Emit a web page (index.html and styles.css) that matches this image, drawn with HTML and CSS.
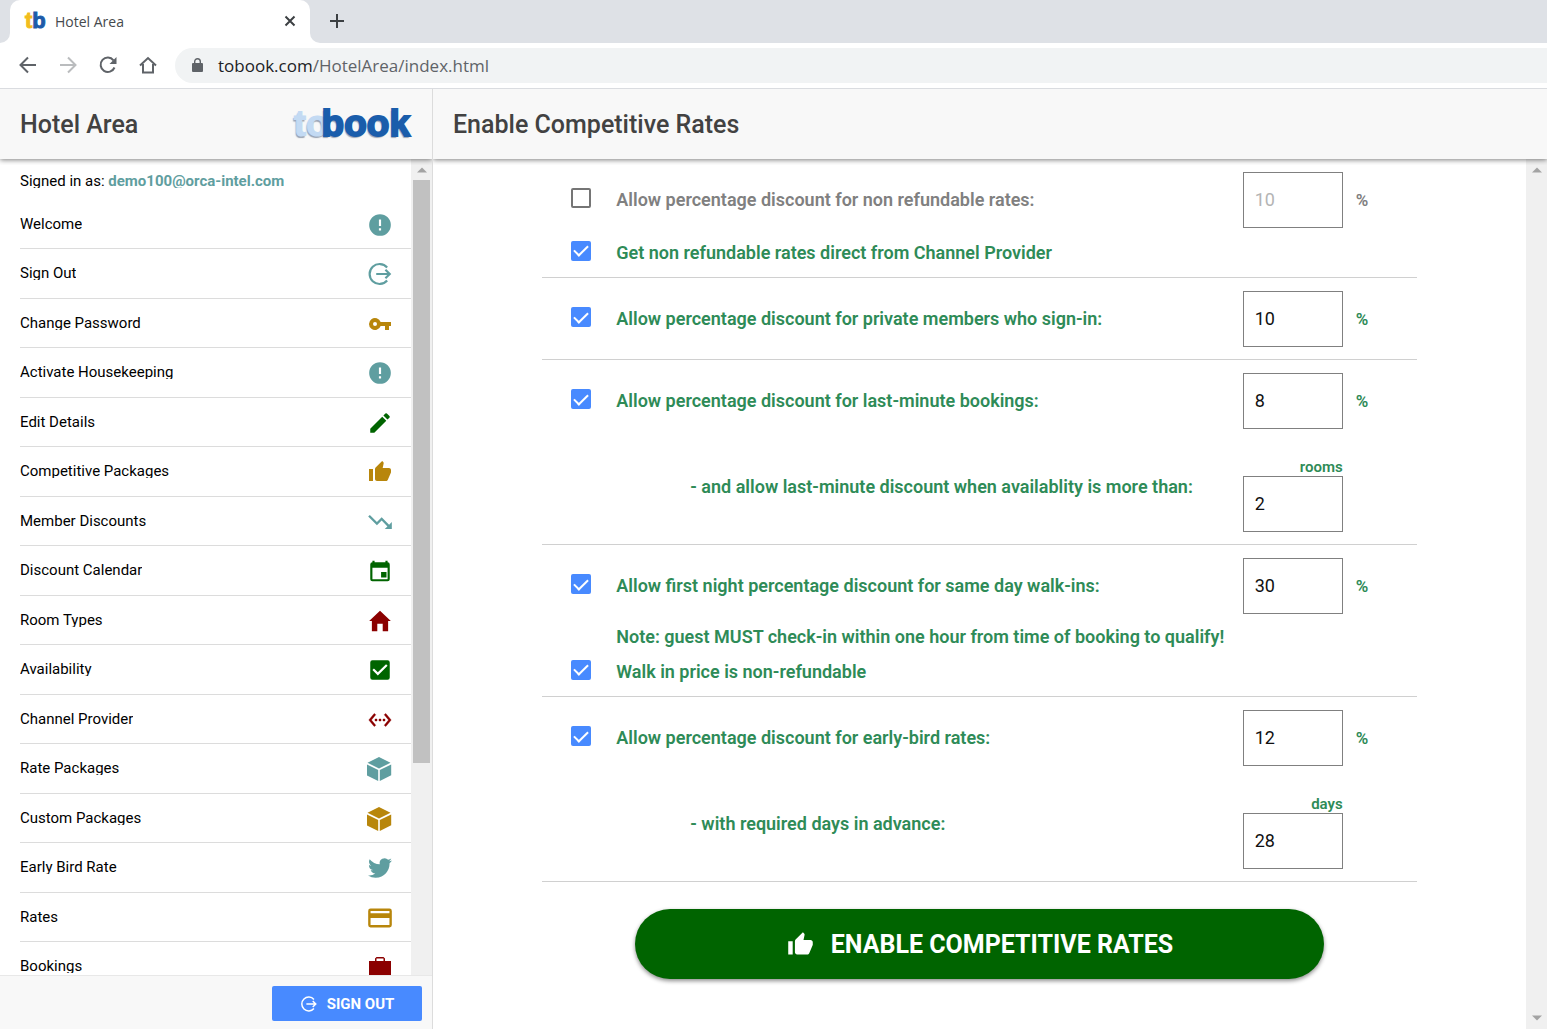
FILE: index.html
```html
<!DOCTYPE html>
<html lang="en">
<head>
<meta charset="utf-8">
<title>Hotel Area</title>
<link rel="stylesheet" href="styles.css">
</head>
<body>
<svg class="sprite" aria-hidden="true">
  <symbol id="alert" viewBox="0 0 24 24"><path d="M12 2a10 10 0 1 0 0 20 10 10 0 0 0 0-20zm1 15h-2v-2h2v2zm0-4h-2V7h2v6z"/></symbol>
  <symbol id="logout" viewBox="0 0 24 24"><path d="M18.600 6A9.200 9.200 0 1 0 18.600 18M8.500 12H21M17 8l4 4-4 4" fill="none" stroke="currentColor" stroke-width="2"/></symbol>
  <symbol id="key" viewBox="-1 -1 26 26"><path d="M12.650 10A6 6 0 1 0 12.650 14H17v4h4v-4h2v-4H12.650zM7 14a2 2 0 1 1 0-4 2 2 0 0 1 0 4z"/></symbol>
  <symbol id="pencil" viewBox="0 0 24 24"><path d="M3 17.250V21h3.750L17.810 9.940l-3.750-3.750L3 17.250zM20.710 7.040a1 1 0 0 0 0-1.410l-2.340-2.340a1 1 0 0 0-1.410 0l-1.830 1.830 3.750 3.750 1.830-1.830z"/></symbol>
  <symbol id="thumb" viewBox="-1 -1 26 26"><path d="M1 21h4V9H1v12zm22-11c0-1.100-.900-2-2-2h-6.310l.950-4.570.030-.320c0-.410-.170-.790-.440-1.060L14.170 1 7.590 7.590C7.220 7.950 7 8.450 7 9v10c0 1.100.900 2 2 2h9c.830 0 1.540-.500 1.840-1.220l3.020-7.050c.090-.230.140-.470.140-.730v-2z"/></symbol>
  <symbol id="trend" viewBox="1 1 22 22"><path d="M16 18l2.290-2.290-4.880-4.880-4 4L2 7.410 3.410 6l6 6 4-4 6.300 6.290L22 12v6z"/></symbol>
  <symbol id="calendar" viewBox="0 0 24 24"><path d="M18 13h-5v5h5zM17 2.500v1.500H7V2.500H5V4a2 2 0 0 0-2 2v13.500a2 2 0 0 0 2 2h14a2 2 0 0 0 2-2V6a2 2 0 0 0-2-2V2.500zM19 19.500H5V9h14z"/></symbol>
  <symbol id="home" viewBox="0 0 24 24"><path d="M9.500 21.500v-7h5v7h5V12H22L12 2.500 2 12h2.500v9.500z"/></symbol>
  <symbol id="tick" viewBox="0 0 24 24"><path d="M19 3H5a2 2 0 0 0-2 2v14a2 2 0 0 0 2 2h14a2 2 0 0 0 2-2V5a2 2 0 0 0-2-2zm-9 14l-5-5 1.410-1.410L10 14.170l7.590-7.590L19 8l-9 9z"/></symbol>
  <symbol id="channel" viewBox="-1 -1 26 26"><path d="M7.770 6.760L6.230 5.480.820 12l5.410 6.520 1.540-1.280L3.420 12zM7 13h2v-2H7zm10-2h-2v2h2zm-6 2h2v-2h-2zm6.770-7.520l-1.540 1.280L20.580 12l-4.350 5.240 1.540 1.280L23.180 12z" stroke="currentColor" stroke-width=".4"/></symbol>
  <symbol id="cube" viewBox="1 0 26 26"><path d="M13 1L24.500 6.800 13 12.500 1.500 6.800zM.800 8.400L12.200 14v11L.800 19.300zM25.200 8.400V19.300L13.800 25V14z"/></symbol>
  <symbol id="bird" viewBox="-1 -1 26 26"><path d="M23.953 4.570a10 10 0 0 1-2.825.775 4.958 4.958 0 0 0 2.163-2.723 9.900 9.900 0 0 1-3.127 1.184 4.920 4.920 0 0 0-8.384 4.482A13.940 13.940 0 0 1 1.671 3.149a4.920 4.920 0 0 0 1.523 6.574 4.900 4.900 0 0 1-2.229-.616v.060a4.923 4.923 0 0 0 3.946 4.827 5 5 0 0 1-2.212.085 4.936 4.936 0 0 0 4.604 3.417A9.867 9.867 0 0 1 0 19.540a13.995 13.995 0 0 0 7.557 2.209c9.053 0 13.998-7.496 13.998-13.985 0-.210 0-.420-.015-.630a9.940 9.940 0 0 0 2.413-2.564z"/></symbol>
  <symbol id="card" viewBox="1 1 22 22"><path d="M20 4H4a2 2 0 0 0-2 2v12a2 2 0 0 0 2 2h16a2 2 0 0 0 2-2V6a2 2 0 0 0-2-2zm0 14H4v-6h16v6zm0-10H4V6h16v2z"/></symbol>
  <symbol id="case" viewBox="0 0 26 26"><path d="M2 7h6V4.500L9.500 3h7L18 4.500V7h6v17H2zM9.500 7h7V4.500h-7z"/></symbol>
  <symbol id="up" viewBox="0 0 10 6"><path d="M0 6L5 1l5 5z"/></symbol>
  <symbol id="down" viewBox="0 0 10 6"><path d="M0 0l5 5 5-5z"/></symbol>
</svg>

<header class="browser">
  <div class="tabs">
    <span class="tab-before"></span>
    <div class="tab">
      <span class="favicon"><span class="gold">t</span><span class="blue">b</span></span>
      <span class="tab-title">Hotel Area</span>
      <button class="plain" aria-label="Close tab"><svg width="12" height="12" viewBox="0 0 12 12"><path d="M1.500 1.500l9 9M10.500 1.500l-9 9"/></svg></button>
    </div>
    <div class="tab-after"><button class="plain" aria-label="New tab"><svg width="16" height="16" viewBox="0 0 16 16"><path d="M8 1v14M1 8h14"/></svg></button></div>
  </div>
  <nav class="toolbar" aria-label="Browser">
    <button class="plain" aria-label="Back"><svg width="18" height="18" viewBox="0 0 18 18"><path d="M17 9H2M9 1.500L1.500 9 9 16.500"/></svg></button>
    <button class="plain faded" aria-label="Forward"><svg width="18" height="18" viewBox="0 0 18 18"><path d="M1 9h15M9 1.500L16.500 9 9 16.500"/></svg></button>
    <button class="plain" aria-label="Reload"><svg width="18" height="18" viewBox="0 0 18 18"><path d="M15.500 11.500A7.200 7.200 0 1 1 14.500 4.300"/><path class="solid" d="M17.500 1v7h-7z"/></svg></button>
    <button class="plain" aria-label="Home"><svg width="18" height="18" viewBox="0 0 18 18"><path d="M4 8v8.500h10V8M1 9.500L9 2l8 7.500"/></svg></button>
    <div class="address" role="textbox" aria-label="Address">
      <svg width="11" height="15" viewBox="0 0 11 15"><path class="solid" d="M1 5h9a1 1 0 0 1 1 1v7a1 1 0 0 1-1 1H1a1 1 0 0 1-1-1V6a1 1 0 0 1 1-1z"/><path d="M2.700 6V3.500a2.800 2.800 0 0 1 5.600 0V6" stroke-width="1.400"/></svg>
      <span><span class="domain">tobook.com</span>/HotelArea/index.html</span>
    </div>
  </nav>
</header>

<div class="app">
  <aside class="sidebar">
    <div class="bar">
      <h2 class="title">Hotel Area</h2>
      <div class="logo"><span class="logo-to">to</span><span class="logo-book">book</span></div>
    </div>
    <div class="scroller">
      <nav class="menu" aria-label="Hotel area">
        <p class="signed"><span class="text">Signed in as: <b>demo100@orca-intel.com</b></span></p>
        <ul class="items">
          <li><a href="#"><span class="text">Welcome</span><svg class="icon teal"><use href="#alert"/></svg></a></li>
          <li><a href="#"><span class="text">Sign Out</span><svg class="icon teal"><use href="#logout"/></svg></a></li>
          <li><a href="#"><span class="text">Change Password</span><svg class="icon amber"><use href="#key"/></svg></a></li>
          <li><a href="#"><span class="text">Activate Housekeeping</span><svg class="icon teal"><use href="#alert"/></svg></a></li>
          <li><a href="#"><span class="text">Edit Details</span><svg class="icon green"><use href="#pencil"/></svg></a></li>
          <li><a href="#"><span class="text">Competitive Packages</span><svg class="icon amber"><use href="#thumb"/></svg></a></li>
          <li><a href="#"><span class="text">Member Discounts</span><svg class="icon teal"><use href="#trend"/></svg></a></li>
          <li><a href="#"><span class="text">Discount Calendar</span><svg class="icon green"><use href="#calendar"/></svg></a></li>
          <li><a href="#"><span class="text">Room Types</span><svg class="icon red"><use href="#home"/></svg></a></li>
          <li><a href="#"><span class="text">Availability</span><svg class="icon green"><use href="#tick"/></svg></a></li>
          <li><a href="#"><span class="text">Channel Provider</span><svg class="icon red"><use href="#channel"/></svg></a></li>
          <li><a href="#"><span class="text">Rate Packages</span><svg class="icon teal"><use href="#cube"/></svg></a></li>
          <li><a href="#"><span class="text">Custom Packages</span><svg class="icon amber"><use href="#cube"/></svg></a></li>
          <li><a href="#"><span class="text">Early Bird Rate</span><svg class="icon teal"><use href="#bird"/></svg></a></li>
          <li><a href="#"><span class="text">Rates</span><svg class="icon amber"><use href="#card"/></svg></a></li>
          <li><a href="#"><span class="text">Bookings</span><svg class="icon red"><use href="#case"/></svg></a></li>
        </ul>
      </nav>
      <div class="track" aria-hidden="true"><svg class="arrow"><use href="#up"/></svg><span class="thumb"></span><span class="rest"></span></div>
    </div>
    <footer class="foot"><button class="signout"><svg class="small-icon"><use href="#logout"/></svg>SIGN OUT</button></footer>
  </aside>

  <main class="main">
    <div class="bar"><h1 class="title">Enable Competitive Rates</h1></div>
    <div class="scroller">
      <form class="rates">
        <section class="group">
          <div class="row muted">
            <input class="check" type="checkbox" id="c1"><label for="c1">Allow percentage discount for non refundable rates:</label>
            <input class="num" type="text" value="10" disabled aria-label="Non refundable discount"><span class="unit">%</span>
          </div>
          <div class="row tall"><input class="check" type="checkbox" id="c2" checked><label for="c2">Get non refundable rates direct from Channel Provider</label></div>
        </section>
        <section class="group padded">
          <div class="row">
            <input class="check" type="checkbox" id="c3" checked><label for="c3">Allow percentage discount for private members who sign-in:</label>
            <input class="num" type="text" value="10" aria-label="Member discount"><span class="unit">%</span>
          </div>
        </section>
        <section class="group padded">
          <div class="row">
            <input class="check" type="checkbox" id="c4" checked><label for="c4">Allow percentage discount for last-minute bookings:</label>
            <input class="num" type="text" value="8" aria-label="Last-minute discount"><span class="unit">%</span>
          </div>
          <div class="row sub">
            <label class="indent" for="n1">- and allow last-minute discount when availablity is more than:</label>
            <div class="stack"><span class="caption">rooms</span><input class="num" type="text" id="n1" value="2"></div>
          </div>
        </section>
        <section class="group">
          <div class="row">
            <input class="check" type="checkbox" id="c5" checked><label for="c5">Allow first night percentage discount for same day walk-ins:</label>
            <input class="num" type="text" value="30" aria-label="Walk-in discount"><span class="unit">%</span>
          </div>
          <p class="note">Note: guest MUST check-in within one hour from time of booking to qualify!</p>
          <div class="row tall"><input class="check" type="checkbox" id="c6" checked><label for="c6">Walk in price is non-refundable</label></div>
        </section>
        <section class="group padded">
          <div class="row">
            <input class="check" type="checkbox" id="c7" checked><label for="c7">Allow percentage discount for early-bird rates:</label>
            <input class="num" type="text" value="12" aria-label="Early-bird discount"><span class="unit">%</span>
          </div>
          <div class="row sub">
            <label class="indent" for="n2">- with required days in advance:</label>
            <div class="stack"><span class="caption">days</span><input class="num" type="text" id="n2" value="28"></div>
          </div>
        </section>
        <button class="enable" type="button"><svg class="large-icon"><use href="#thumb"/></svg>ENABLE COMPETITIVE RATES</button>
      </form>
      <div class="track" aria-hidden="true"><svg class="arrow"><use href="#up"/></svg><span class="rest"></span><svg class="arrow"><use href="#down"/></svg></div>
    </div>
  </main>
</div>
</body>
</html>
```
FILE: styles.css
```css
* { box-sizing: border-box; }
body {
  margin: 0;
  height: 100vh;
  display: flex;
  flex-direction: column;
  overflow: hidden;
  background: #fff;
  color: #000;
  font-family: Roboto, "Liberation Sans", sans-serif;
}
h1, h2, p, ul { margin: 0; padding: 0; }
button { font-family: inherit; cursor: pointer; }
.sprite { display: none; }

/* Browser frame */
.browser {
  flex: none;
  border-bottom: 1px solid #dadce0;
  font-family: "Open Sans", "Noto Sans", sans-serif;
}
.browser svg { display: block; fill: none; stroke: currentColor; stroke-width: 2; }
.browser .solid { fill: currentColor; stroke: none; }
.tabs {
  display: flex;
  height: 43px;
  background: linear-gradient(#dee1e6 50%, #fff 50%);
}
.tab-before { width: 10px; background: #dee1e6; border-bottom-right-radius: 10px; }
.tab {
  width: 300px;
  display: flex;
  align-items: center;
  gap: 9px;
  padding: 0 14px 1px 15px;
  background: #fff;
  border-radius: 10px 10px 0 0;
}
.favicon {
  width: 21px;
  display: flex;
  font: 700 22px/22px "Liberation Sans", sans-serif;
}
.gold { color: #f2bd1d; -webkit-text-stroke: 1px #f2bd1d; }
.blue { color: #1d5ba9; -webkit-text-stroke: 1px #1d5ba9; }
.tab-title { flex: 1; font-size: 14px; color: #45494d; }
.tab-after {
  flex: 1;
  display: flex;
  align-items: center;
  padding: 0 0 1px 19px;
  background: #dee1e6;
  border-bottom-left-radius: 10px;
}
.plain { padding: 0; border: 0; background: none; color: #3c4043; }
.toolbar {
  display: flex;
  align-items: center;
  gap: 22px;
  height: 45px;
  padding: 0 0 1px 19px;
}
.toolbar .plain { color: #5f6368; }
.toolbar .faded { color: #babcbe; }
.address {
  flex: 1;
  height: 35px;
  display: flex;
  align-items: center;
  gap: 15px;
  margin-left: -4px;
  padding-left: 17px;
  border-radius: 18px 0 0 18px;
  background: #f1f3f4;
  color: #5f6368;
  font-size: 17px;
}
.domain { color: #202124; }

/* App frame */
.app { flex: 1; min-height: 0; display: flex; }
.sidebar {
  flex: none;
  width: 433px;
  display: flex;
  flex-direction: column;
  border-right: 1px solid #dcdcdc;
}
.main { flex: 1; min-width: 0; display: flex; flex-direction: column; }
.bar {
  position: relative;
  flex: none;
  height: 70px;
  display: flex;
  align-items: center;
  justify-content: space-between;
  padding: 0 22px 0 20px;
  background: #f8f8f8;
  box-shadow: 0 1px 5px rgba(0, 0, 0, .5);
  clip-path: inset(0 0 -6px 0);
}
.title { color: #424242; font-size: 25px; font-weight: 500; }
.logo {
  display: flex;
  font: 700 37px/40px "Liberation Sans", sans-serif;
  text-shadow: -1px 2px 1px rgba(60, 80, 110, .5);
}
.logo-to { color: #c3daf3; margin-right: -7px; -webkit-text-stroke: 1px #c3daf3; }
.logo-book { color: #1a5dab; -webkit-text-stroke: 2px #1a5dab; }
.scroller { flex: 1; min-height: 0; display: flex; overflow: hidden; }
.track {
  flex: none;
  width: 21px;
  display: flex;
  flex-direction: column;
  align-items: center;
  background: #f0f0f0;
}
.arrow { width: 10px; height: 21px; fill: #a3a3a3; }
.thumb { flex: 11; width: 17px; background: #c1c1c1; }
.rest { flex: 4; }

/* Menu */
.menu { flex: 1; padding-left: 20px; }
.signed { height: 41px; display: flex; align-items: center; padding-top: 3px; }
.signed b { color: #5f9ea0; }
.text { font-size: 15px; line-height: 13px; overflow: hidden; }
.items { list-style: none; }
.items a {
  height: 49px;
  display: flex;
  align-items: center;
  justify-content: space-between;
  padding-right: 18px;
  border-bottom: 1px solid #dcdcdc;
  color: inherit;
  text-decoration: none;
}
.items li:nth-child(even) a { height: 50px; padding-bottom: 1px; }
.icon { width: 26px; height: 26px; margin-top: 2px; fill: currentColor; }
.teal { color: #5f9ea0; }
.amber { color: #b8860b; }
.green { color: #006400; }
.red { color: #8b0000; }
.foot {
  flex: none;
  height: 54px;
  display: flex;
  align-items: center;
  justify-content: flex-end;
  padding: 2px 10px 0 0;
  background: #f8f8f8;
  border-top: 1px solid #e8e8e8;
}
.signout {
  width: 150px;
  height: 35px;
  display: flex;
  align-items: center;
  justify-content: center;
  gap: 9px;
  border: 0;
  border-radius: 2px;
  background: #488aff;
  color: #fff;
  font-size: 15px;
  font-weight: 700;
}
.small-icon { width: 18px; height: 18px; fill: currentColor; }
.large-icon { width: 29px; height: 29px; fill: currentColor; }

/* Rates form */
.rates { flex: 1; color: #2e8b57; font-size: 18px; font-weight: 600; }
.group { margin: 0 10%; padding-top: 13px; border-bottom: 1px solid #d0d0d0; }
.padded { padding-bottom: 12px; }
.row {
  display: grid;
  grid-template-columns: 20px 1fr;
  align-items: center;
  padding-left: 29px;
}
.row label { padding: 0 0 1px 25px; }
.muted { color: #808080; }
.tall { height: 49px; }
.check {
  appearance: none;
  width: 20px;
  height: 20px;
  margin: 0 0 4px;
  border: 2px solid #757575;
  border-radius: 2px;
  background: #fff;
}
.check:checked {
  border: 0;
  background: #488aff;
  display: grid;
  place-items: center;
}
.check:checked::after {
  content: "";
  width: 6px;
  height: 12px;
  margin-bottom: 3px;
  border: solid #fff;
  border-width: 0 2px 2px 0;
  transform: rotate(45deg);
}
.num {
  width: 100px;
  height: 56px;
  padding: 0 11px 2px;
  border: 1px solid #808080;
  border-radius: 0;
  background: #fff;
  color: #111;
  font: 400 18px Roboto, sans-serif;
}
.num:disabled { color: #b4b4b4; }
.unit { padding-left: 13px; font-size: 17px; }
.row:has(.unit) { grid-template-columns: 20px 1fr 100px 74px; }
.sub { grid-template-columns: 1fr 100px 74px; margin-top: 29px; }
.row .indent { padding: 0 0 17px 119px; }
.stack { display: flex; flex-direction: column; align-items: flex-end; }
.caption { font-size: 15px; line-height: 18px; }
.note { padding: 12px 0 0 74px; line-height: 21px; }
.enable {
  width: 63%;
  height: 70px;
  display: flex;
  align-items: center;
  justify-content: center;
  gap: 16px;
  margin: 27px auto 0;
  border: 0;
  border-radius: 35px;
  background: #006400;
  color: #fff;
  font-size: 25px;
  font-weight: 700;
  box-shadow: 0 2px 4px rgba(0, 0, 0, .45);
}
```
